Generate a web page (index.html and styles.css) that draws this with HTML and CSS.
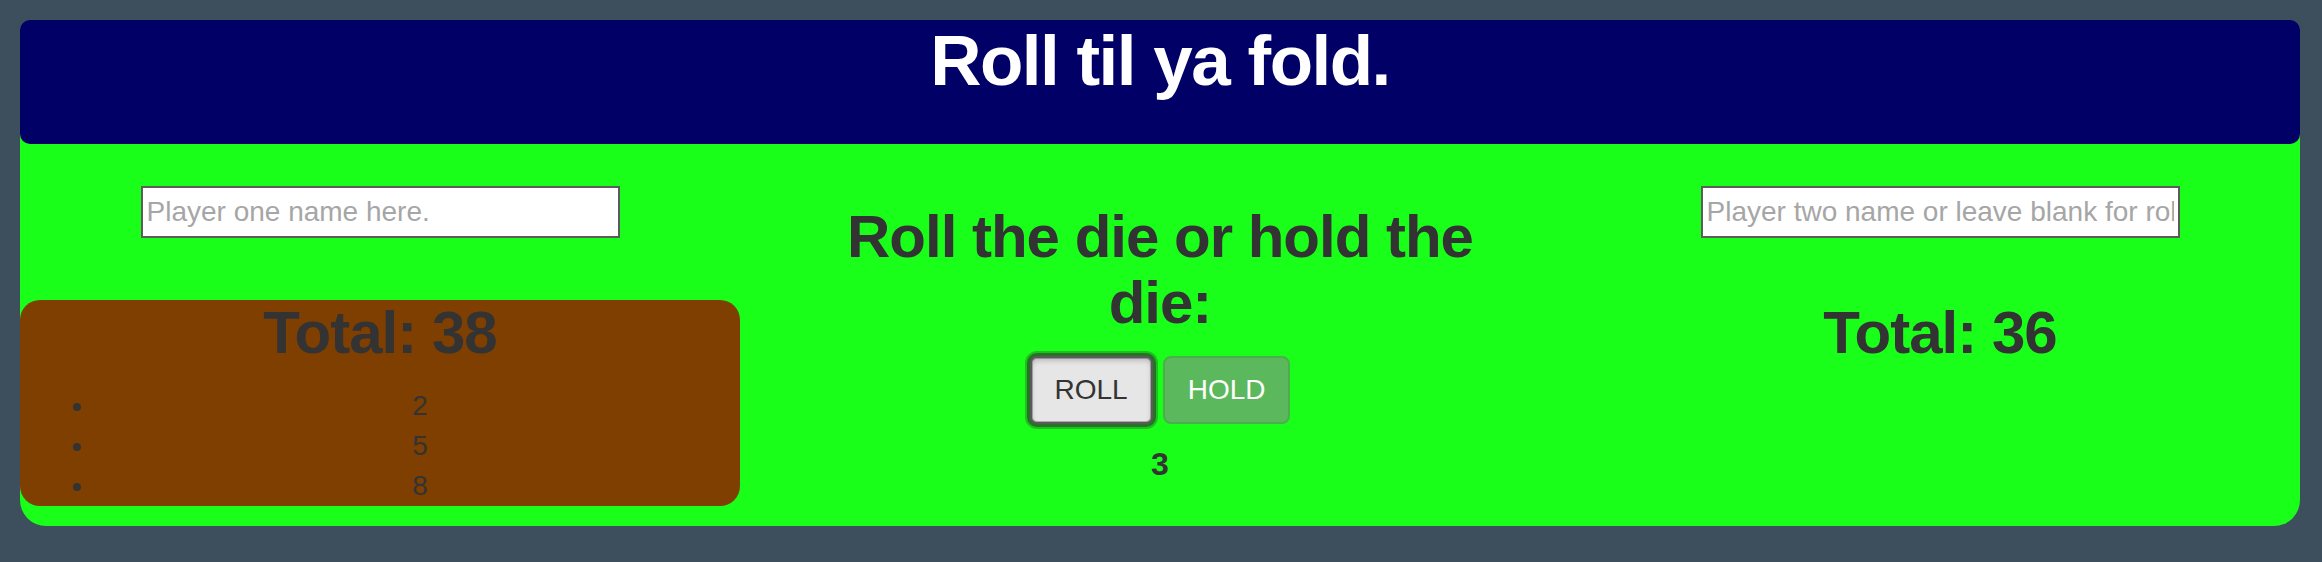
FILE: index.html
```html
<!DOCTYPE html>
<html lang="en">
<head>
<meta charset="utf-8">
<title>Roll til ya fold.</title>
<link rel="stylesheet" href="styles.css">
</head>
<body>
<div class="app">
  <header class="banner">
    <h1 class="title">Roll til ya fold.</h1>
  </header>
  <main class="board">
    <section class="player">
      <input class="name-input" type="text" placeholder="Player one name here.">
      <div class="score active">
        <h2 class="total">Total: 38</h2>
        <ul class="rolls">
          <li>2</li>
          <li>5</li>
          <li>8</li>
        </ul>
      </div>
    </section>
    <section class="controls">
      <h2 class="prompt">Roll the die or hold the die:</h2>
      <div class="buttons">
        <button class="btn btn-roll" type="button">ROLL</button>
        <button class="btn btn-hold" type="button">HOLD</button>
      </div>
      <div class="die">3</div>
    </section>
    <section class="player">
      <input class="name-input" type="text" placeholder="Player two name or leave blank for robot.">
      <div class="score">
        <h2 class="total">Total: 36</h2>
      </div>
    </section>
  </main>
</div>
</body>
</html>
```
FILE: styles.css
```css
* {
  box-sizing: border-box;
}

html, body {
  margin: 0;
  padding: 0;
}

body {
  background: #3d4f5c;
  font-family: "Liberation Sans", Arial, Helvetica, sans-serif;
  color: #333333;
}

.app {
  width: 2280px;
  margin: 20px 0 0 20px;
  background: #19ff19;
  border-radius: 26px;
}

.banner {
  height: 124px;
  padding-top: 2px;
  background: #000066;
  border-radius: 10px;
  text-align: center;
}

.title {
  margin: 0;
  color: #ffffff;
  font-size: 71px;
  line-height: 78px;
  font-weight: bold;
  letter-spacing: -1.5px;
}

.board {
  display: grid;
  grid-template-columns: 720px 840px 720px;
}

.player {
  padding: 42px 0 20px;
  display: flex;
  flex-direction: column;
  align-items: center;
}

.name-input {
  display: block;
  width: 479px;
  height: 52px;
  margin: 0;
  padding: 0 4px;
  border: 2px solid #5c5c5c;
  border-radius: 0;
  background: #ffffff;
  font-family: "Liberation Sans", Arial, Helvetica, sans-serif;
  font-size: 28px;
  color: #333333;
  outline: none;
}

.name-input::placeholder {
  color: #a6a6a6;
}

.score {
  width: 100%;
  margin-top: 62px;
  text-align: center;
}

.score.active {
  background: #7f3f00;
  border-radius: 20px;
}

.total {
  margin: 0;
  font-size: 60px;
  line-height: 66px;
  font-weight: bold;
  letter-spacing: -1px;
}

.rolls {
  margin: 20px 0 0;
  padding: 0 0 0 76px;
  font-size: 28px;
  line-height: 40px;
  list-style: disc;
}

.rolls li {
  padding-left: 4px;
}

.controls {
  padding-top: 60px;
  text-align: center;
}

.prompt {
  max-width: 680px;
  margin: 0 auto 20px;
  font-size: 60px;
  line-height: 66px;
  font-weight: bold;
  letter-spacing: -1px;
}

.buttons {
  display: flex;
  justify-content: center;
  gap: 10px;
}

.btn {
  height: 68px;
  padding: 0 23px;
  border: 2px solid transparent;
  border-radius: 8px;
  font-family: "Liberation Sans", Arial, Helvetica, sans-serif;
  font-size: 28px;
  line-height: 40px;
  cursor: pointer;
}

.btn-roll {
  background: #e6e6e6;
  border-color: #5a5a5a;
  border-radius: 7px;
  color: #333333;
  box-shadow: inset 0 3px 5px rgba(0, 0, 0, 0.18), inset 0 0 0 1px #adadad, 0 0 0 3px rgba(45, 80, 45, 0.7), 0 0 0 5px rgba(30, 120, 30, 0.45);
}

.btn-hold {
  background: #5cb85c;
  border-color: #4cae4c;
  color: #ffffff;
}

.die {
  margin-top: 20px;
  font-size: 32px;
  line-height: 40px;
  font-weight: bold;
}
```
